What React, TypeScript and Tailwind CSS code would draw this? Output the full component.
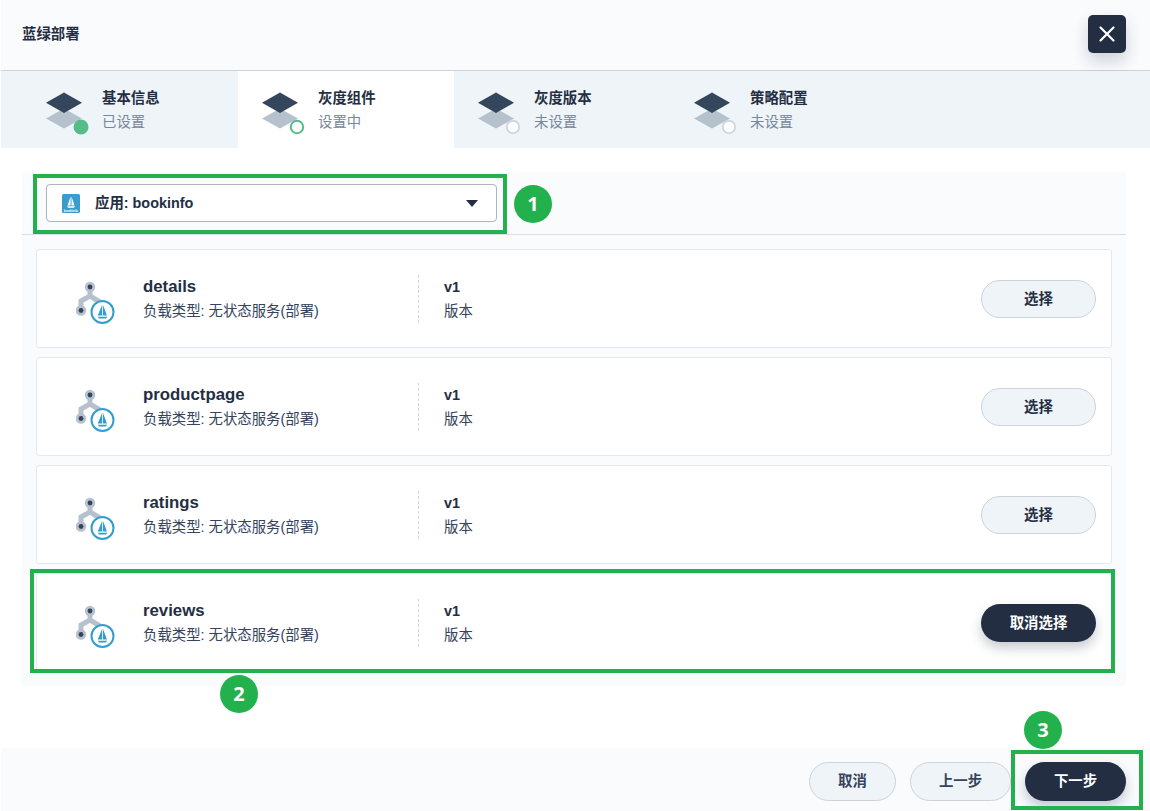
import { X } from "lucide-react";

const fontStack = "font-['Liberation_Sans','Noto_Sans_CJK_SC',sans-serif]";

const steps = [
  { title: "基本信息", desc: "已设置", state: "done" },
  { title: "灰度组件", desc: "设置中", state: "active" },
  { title: "灰度版本", desc: "未设置", state: "todo" },
  { title: "策略配置", desc: "未设置", state: "todo" },
];

const workloads = ["details", "productpage", "ratings", "reviews"];

function StepIcon({ state }: { state: string }) {
  return (
    <svg width="44" height="44" viewBox="0 0 44 44" className="shrink-0 overflow-visible">
      <path d="M18 20.5 L36 30.5 L18 40.5 L0 30.5 Z" fill="#b6c1ce" />
      <path d="M18 4.5 L36 14.7 L18 25 L0 14.7 Z" fill="#34465c" />
      {state === "done" && <circle cx="35" cy="39" r="7.5" fill="#55bc8a" />}
      {state === "active" && (
        <circle cx="35" cy="39" r="6.2" fill="#fff" stroke="#55bc8a" strokeWidth="2" />
      )}
      {state === "todo" && (
        <circle cx="35" cy="39" r="6.2" fill="#fff" stroke="#d1d7df" strokeWidth="2" />
      )}
    </svg>
  );
}

function WorkloadIcon() {
  return (
    <svg width="40" height="44" viewBox="0 0 40 44" className="mt-2 shrink-0">
      <path
        d="M14 6 V15 L5 20 V29 M14 15 L24 21"
        fill="none"
        stroke="#b6c1ce"
        strokeWidth="5"
      />
      <circle cx="14" cy="6" r="5.2" fill="#b6c1ce" />
      <circle cx="14" cy="6" r="2.4" fill="#36435c" />
      <circle cx="5" cy="29.5" r="5.2" fill="#b6c1ce" />
      <circle cx="5" cy="29.5" r="2.4" fill="#36435c" />
      <circle cx="26.5" cy="31" r="11" fill="#fff" stroke="#329dce" strokeWidth="2" />
      <path
        d="M26.1 23.8 V34.6 H21.8 Z M26.9 23.8 L31 34.6 H26.9 Z M21.8 35.8 H31.2 L30 37.6 H23 Z"
        fill="#329dce"
      />
    </svg>
  );
}

function AppLogo() {
  return (
    <svg width="18" height="19" viewBox="0 0 18 19" className="shrink-0">
      <rect width="18" height="19" rx="1.5" fill="#3a9cca" />
      <path d="M8.6 2.5 V11.5 H5.5 Z M9.5 2.5 L12.5 11.5 H9.5 Z M5 12.3 H13 L12 13.8 H6 Z" fill="#fff" />
      <text x="9" y="17.5" textAnchor="middle" fontSize="3.4" fontWeight="700" fill="#fff">
        bookinfo
      </text>
    </svg>
  );
}

function WorkloadCard({ name, selected }: { name: string; selected: boolean }) {
  return (
    <div className="flex h-[99px] items-center rounded-[3px] border border-[#e3e9ef] bg-white pr-[15px] pl-[39px]">
      <WorkloadIcon />
      <div className="ml-[27px] w-[275px]">
        <div className="text-[16.8px] leading-[24px] font-bold text-[#242e42]">{name}</div>
        <div className="text-[14.4px] leading-[24px] text-[#36435c]">
          负载类型: 无状态服务(部署)
        </div>
      </div>
      <div className="flex-1 border-l border-dashed border-[#d1d7df] pl-[25px]">
        <div className="text-[14.4px] leading-[24px] font-bold text-[#242e42]">v1</div>
        <div className="text-[14.4px] leading-[24px] text-[#36435c]">版本</div>
      </div>
      {selected ? (
        <button className="h-[38px] w-[115px] rounded-full bg-[#242e42] pt-[2px] text-[14.4px] font-bold text-white shadow-[0_6px_12px_rgba(36,46,66,0.25)]">
          取消选择
        </button>
      ) : (
        <button className="h-[38px] w-[115px] rounded-full border border-[#ccd3db] bg-[#eff4f9] pt-[2px] text-[14.4px] font-bold text-[#242e42]">
          选择
        </button>
      )}
    </div>
  );
}

function Marker({ label, className }: { label: string; className: string }) {
  return (
    <div
      className={`absolute flex h-[38px] w-[38px] items-center justify-center rounded-full bg-[#22b14c] font-['Open_Sans',sans-serif] text-[20px] font-bold text-white ${className}`}
    >
      {label}
    </div>
  );
}

export default function App() {
  return (
    <div className={`relative flex h-[811px] w-[1150px] flex-col overflow-hidden bg-white pl-px ${fontStack}`}>
      {/* Header */}
      <div className="flex h-[71px] shrink-0 items-center justify-between border-b border-[#ccd3db] bg-[#f9fbfd] pr-6 pl-[21px]">
        <div className="text-[14.4px] font-bold text-[#242e42]">蓝绿部署</div>
        <button className="mb-[2px] flex h-[38px] w-[38px] items-center justify-center rounded-[5px] bg-[#242e42] text-white shadow-[0_8px_16px_rgba(36,46,66,0.2)]">
          <X size={26} strokeWidth={2} />
        </button>
      </div>

      {/* Steps */}
      <div className="flex h-[77px] shrink-0 bg-[#eff4f9]">
        {steps.map((step, i) => (
          <div
            key={step.title}
            className={`flex items-center gap-[14px] ${
              i === 0 ? "w-[237px] pl-[45px]" : "w-[216px] pl-6"
            } ${step.state === "active" ? "bg-white" : ""}`}
          >
            <StepIcon state={step.state} />
            <div className="-ml-[2px]">
              <div className="text-[14.4px] leading-[24px] font-bold text-[#242e42]">
                {step.title}
              </div>
              <div className="text-[14.4px] leading-[24px] text-[#79879c]">{step.desc}</div>
            </div>
          </div>
        ))}
      </div>

      {/* Body */}
      <div className="flex-1 pt-6 pr-6 pl-[21px]">
        <div className="h-[514px] rounded-[3px] bg-[#f9fbfd]">
          <div className="flex h-[63px] items-center border-b border-[#d8dee5] pl-6">
            <div className="flex h-[38px] w-[451px] items-center rounded-[4px] border border-[#abb4c0] bg-white pr-[18px] pl-[15px]">
              <AppLogo />
              <span className="ml-[15px] flex-1 pt-px text-[14.4px] font-bold text-[#242e42]">
                应用: bookinfo
              </span>
              <span className="h-0 w-0 border-x-[6px] border-t-[7px] border-x-transparent border-t-[#242e42]" />
            </div>
          </div>
          <div className="flex flex-col gap-[9px] px-[14px] pt-[14px]">
            {workloads.map((name) => (
              <WorkloadCard key={name} name={name} selected={name === "reviews"} />
            ))}
          </div>
        </div>
      </div>

      {/* Footer */}
      <div className="flex h-[63px] shrink-0 items-start justify-end gap-[14px] bg-[#f9fbfd] pt-[14px] pr-6">
        <button className="h-[39px] w-[87px] rounded-full border border-[#ccd3db] bg-[#eff4f9] text-[14.4px] font-bold text-[#36435c]">
          取消
        </button>
        <button className="h-[39px] w-[101px] rounded-full border border-[#ccd3db] bg-[#eff4f9] text-[14.4px] font-bold text-[#36435c]">
          上一步
        </button>
        <button className="h-[39px] w-[101px] rounded-full bg-[#242e42] text-[14.4px] font-bold text-white shadow-[0_6px_12px_rgba(36,46,66,0.25)]">
          下一步
        </button>
      </div>

      {/* Annotations */}
      <div className="absolute top-[174px] left-[33px] h-[60px] w-[474px] border-4 border-[#22b14c]" />
      <div className="absolute top-[569px] left-[30px] h-[104px] w-[1085px] border-4 border-[#22b14c]" />
      <div className="absolute top-[750px] left-[1011px] h-[60px] w-[132px] border-4 border-[#22b14c]" />
      <Marker label="1" className="top-[185px] left-[514px]" />
      <Marker label="2" className="top-[675px] left-[220px]" />
      <Marker label="3" className="top-[711px] left-[1024px]" />
    </div>
  );
}
